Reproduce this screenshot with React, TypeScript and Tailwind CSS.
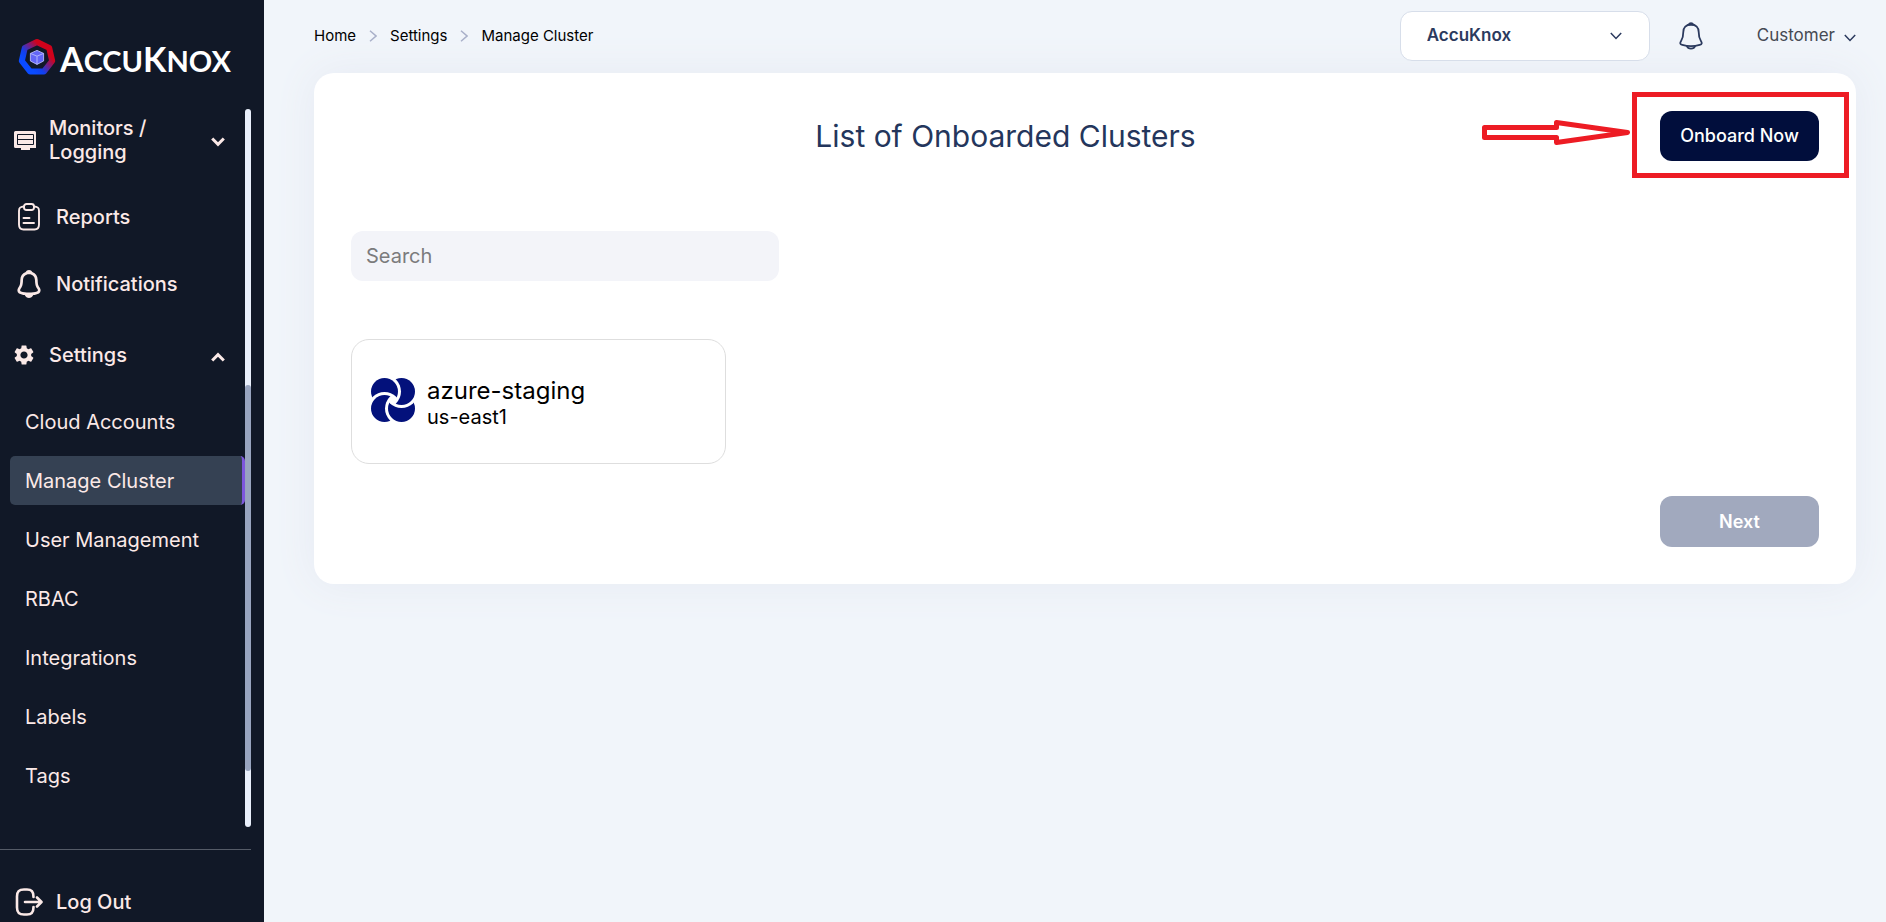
import type { ReactNode } from "react";
import { MdSettings } from "react-icons/md";

const subItems = [
  "Cloud Accounts",
  "Manage Cluster",
  "User Management",
  "RBAC",
  "Integrations",
  "Labels",
  "Tags",
];

function LogoMark() {
  return (
    <svg viewBox="0 0 38 38" className="size-[38px] shrink-0" aria-hidden="true">
      <defs>
        <linearGradient id="ring" x1="0.85" y1="0.2" x2="0.2" y2="0.8">
          <stop offset="0.15" stopColor="#d0021b" />
          <stop offset="0.75" stopColor="#1040f0" />
          <stop offset="1" stopColor="#0a4bff" />
        </linearGradient>
      </defs>
      <path
        d="M19 4 31.2 9.9 34.2 23 25.8 33.6H12.2L3.8 23 6.8 9.9Z"
        fill="none"
        stroke="url(#ring)"
        strokeWidth="6"
        strokeLinejoin="round"
      />
      <path d="M19 12.4 25.6 15.4V23L19 26.4 12.4 23V15.4Z" fill="#6366f8" />
      <path
        d="M19 12.4 25.6 15.4V23L19 26.4 12.4 23V15.4ZM12.4 15.4 19 18.2 25.6 15.4M19 18.2V26.4"
        fill="none"
        stroke="#b9bbff"
        strokeWidth="0.9"
      />
    </svg>
  );
}

function MonitorIcon() {
  return (
    <svg viewBox="0 0 22 19" className="h-[19px] w-[22px] shrink-0" aria-hidden="true">
      <path
        fill="currentColor"
        d="M1.5 0H20.5A1.5 1.5 0 0 1 22 1.5V17H16V19H7V17H1.5A1.5 1.5 0 0 1 0 15.500V1.500A1.5 1.5 0 0 1 1.500 0Z"
      />
      <path d="M3.500 3.500H19.500V13.500H3.500ZM3.500 8.500H19.500" fill="none" stroke="#111827" strokeWidth="1" />
    </svg>
  );
}

function ReportIcon() {
  return (
    <svg
      viewBox="0 0 24 28"
      className="h-7 w-6 shrink-0"
      fill="none"
      stroke="currentColor"
      strokeWidth="1.9"
      strokeLinecap="round"
      strokeLinejoin="round"
      aria-hidden="true"
    >
      <rect x="7" y="1" width="10" height="6" rx="2.500" />
      <path d="M7 3.500C3 3.600 2 5 2 8V21.500C2 25 3 26.500 6.500 26.500H17.500C21 26.500 22 25 22 21.500V8C22 5 21 3.600 17 3.500" />
      <path d="M6.500 15H12.500M6.500 20H17" />
    </svg>
  );
}

function BellSolidIcon() {
  return (
    <svg viewBox="0 0 24 28" className="h-7 w-6 shrink-0" aria-hidden="true">
      <path
        fill="currentColor"
        fillRule="evenodd"
        d="M12 0C13.500 0 14.700 .8 15.300 2.100 18.800 3.400 20.600 6.300 20.700 10 20.800 14.500 21.300 15.700 22.800 17.800 24 19.600 24 22.300 22 23.400 20.300 24.300 18 24.800 16.300 25.100 15.300 27 13.800 28 12 28S8.700 27 7.700 25.100C6 24.800 3.700 24.300 2 23.400 0 22.300 0 19.600 1.200 17.800 2.700 15.700 3.200 14.500 3.300 10 3.400 6.300 5.200 3.400 8.700 2.100 9.300 .8 10.500 0 12 0ZM12 4.300C8.300 4.300 6.100 6.700 6 10.300 5.900 15.200 5 16.800 3.500 19.100 2.900 20.300 3 21 4 21.400 8.500 22.900 15.500 22.900 20 21.400 21 21 21.100 20.300 20.500 19.100 19 16.800 18.100 15.200 18 10.300 17.900 6.700 15.700 4.300 12 4.300Z"
      />
    </svg>
  );
}

function BellOutlineIcon() {
  return (
    <svg
      viewBox="0 0 24 28"
      className="h-7 w-6"
      fill="none"
      stroke="currentColor"
      strokeWidth="1.8"
      strokeLinecap="round"
      strokeLinejoin="round"
      aria-hidden="true"
    >
      <path d="M12 2.500C7 2.500 4.300 5.800 4.300 10 4.300 15 3.800 16.300 2.200 18.700 .6 21 1 22.300 3.300 22.900 9 24.600 15 24.600 20.700 22.900 23 22.300 23.400 21 21.800 18.700 20.200 16.300 19.700 15 19.700 10 19.700 5.800 17 2.500 12 2.500Z" />
      <path d="M9.800 2.500C10.500 .8 13.500 .8 14.200 2.500ZM8 24.300C9 27.500 15 27.500 16 24.300" />
    </svg>
  );
}

function LogoutIcon() {
  return (
    <svg
      viewBox="0 0 28 28"
      className="size-7 shrink-0"
      fill="none"
      stroke="currentColor"
      strokeWidth="2.6"
      strokeLinecap="round"
      strokeLinejoin="round"
      aria-hidden="true"
    >
      <path d="M18.500 9C18.500 3.500 16.500 1.500 12 1.500H9C4 1.500 2 3.500 2 8.500V19.500C2 24.500 4 26.500 9 26.500H12C16.500 26.500 18.500 24.500 18.500 19" />
      <path d="M10 14H26M22 9.500 26.500 14 22 18.500" />
    </svg>
  );
}

function PetalIcon() {
  const petals = [
    { id: "petal-a", x: 13.5, y: 13.5, cutX: 13.5, cutY: 30.5 },
    { id: "petal-b", x: 30.5, y: 13.5, cutX: 13.5, cutY: 13.5 },
    { id: "petal-c", x: 30.5, y: 30.5, cutX: 30.5, cutY: 13.5 },
    { id: "petal-d", x: 13.5, y: 30.5, cutX: 30.5, cutY: 30.5 },
  ];
  return (
    <svg viewBox="0 0 44 44" className="size-11 shrink-0" aria-hidden="true">
      {petals.map((p) => (
        <g key={p.id}>
          <mask id={p.id} maskUnits="userSpaceOnUse" x="0" y="0" width="44" height="44">
            <rect width="44" height="44" fill="white" />
            <circle cx={p.cutX} cy={p.cutY} r="16.5" fill="black" />
          </mask>
          <circle cx={p.x} cy={p.y} r="13.5" fill="#03117b" mask={`url(#${p.id})`} />
        </g>
      ))}
    </svg>
  );
}

function BoldChevron({ up = false }: { up?: boolean }) {
  return (
    <svg
      viewBox="0 0 14 10"
      className="mt-1 h-2.5 w-3.5 shrink-0"
      fill="none"
      stroke="currentColor"
      strokeWidth="3"
      aria-hidden="true"
    >
      <path d={up ? "M1.200 8.500 7 2.700 12.800 8.500" : "M1.200 1.500 7 7.300 12.800 1.500"} />
    </svg>
  );
}

function ThinChevron({ className }: { className: string }) {
  return (
    <svg
      viewBox="0 0 12 8"
      className={className}
      fill="none"
      stroke="currentColor"
      strokeWidth="1.5"
      aria-hidden="true"
    >
      <path d="M.8 1 6 6.500 11.200 1" />
    </svg>
  );
}

function CrumbChevron() {
  return (
    <svg
      viewBox="0 0 8 12"
      className="h-3 w-2 text-[#a9b0c9]"
      fill="none"
      stroke="currentColor"
      strokeWidth="1.5"
      aria-hidden="true"
    >
      <path d="M1 .8 7 6 1 11.200" />
    </svg>
  );
}

function NavLink({ icon, children }: { icon: ReactNode; children: ReactNode }) {
  return (
    <a href="#" className="flex h-[67px] items-center gap-[15px] pl-[17px] text-xl font-medium">
      <span className="flex w-6 justify-center">{icon}</span>
      {children}
    </a>
  );
}

function Sidebar() {
  return (
    <aside className="flex w-[264px] shrink-0 flex-col bg-[#111827] text-[#fbe9e7]">
      <a href="#" aria-label="AccuKnox" className="flex h-[109px] shrink-0 items-center gap-1 pt-1 pl-[18px] text-white">
        <LogoMark />
        <span className="pt-1 font-['Lato',sans-serif] text-[29px] leading-none font-bold">
          <span className="text-[34px]">A</span>CCU<span className="text-[34px]">K</span>NOX
        </span>
      </a>
      <div className="flex h-[718px] shrink-0 pr-[13px]">
        <nav className="min-w-0 flex-1">
          <button type="button" className="mb-3 flex h-[62px] w-full items-center pr-5 pl-3.5 text-left text-xl leading-6 font-medium">
            <MonitorIcon />
            <span className="ml-[13px] flex-1">
              Monitors /<br />
              Logging
            </span>
            <BoldChevron />
          </button>
          <NavLink icon={<ReportIcon />}>Reports</NavLink>
          <NavLink icon={<BellSolidIcon />}>Notifications</NavLink>
          <button type="button" className="flex h-[75px] w-full items-center pr-5 pl-3 text-left text-xl font-medium">
            <MdSettings className="size-6" />
            <span className="ml-[13px] flex-1">Settings</span>
            <BoldChevron up />
          </button>
          <ul className="flex flex-col gap-2.5 pt-[5px] pl-2.5 text-xl">
            {subItems.map((item) => (
              <li key={item}>
                <a
                  href="#"
                  className={
                    item === "Manage Cluster"
                      ? "flex h-[49px] items-center rounded-[5px] border-r-3 border-[#7e57dd] bg-[#354153] pl-[15px]"
                      : "flex h-[49px] items-center pl-[15px]"
                  }
                >
                  {item}
                </a>
              </li>
            ))}
          </ul>
        </nav>
        <div className="w-1.5 rounded-full bg-[#e9effb] pt-[276px]">
          <div className="h-[386px] rounded-full bg-[#98a4bf]" />
        </div>
      </div>
      <div className="mt-[22px] mr-[13px] shrink-0 border-t border-[#555b67] pt-[18px]">
        <NavLink icon={<LogoutIcon />}>Log Out</NavLink>
      </div>
    </aside>
  );
}

function TopBar() {
  return (
    <header className="flex h-[73px] items-center justify-between pb-px">
      <nav aria-label="Breadcrumb" className="flex items-center gap-[13px] text-[15px] text-black">
        <a href="#">Home</a>
        <CrumbChevron />
        <a href="#">Settings</a>
        <CrumbChevron />
        <a href="#">Manage Cluster</a>
      </nav>
      <div className="flex items-center">
        <div className="relative">
          <select
            aria-label="Workspace"
            className="block h-[50px] w-[250px] appearance-none rounded-xl border border-[#d7deea] bg-white pl-[26px] text-[17px] font-semibold text-[#2b3a5e]"
          >
            <option>AccuKnox</option>
          </select>
          <ThinChevron className="pointer-events-none absolute top-[21px] right-7 h-2 w-3 text-[#2b3a5e]" />
        </div>
        <button type="button" aria-label="Notifications" className="ml-[29px] text-[#2b3a5e]">
          <BellOutlineIcon />
        </button>
        <button type="button" className="ml-[54px] flex items-center gap-[9px] text-[17px] text-[#464a53]">
          Customer
          <ThinChevron className="mt-1 h-2 w-3 text-[#2b3a5e]" />
        </button>
      </div>
    </header>
  );
}

function Callout() {
  return (
    <>
      <div className="pointer-events-none absolute -top-[19px] -right-[30px] -bottom-[17px] -left-7 border-5 border-[#ed1c24]" />
      <svg
        viewBox="0 0 148 26"
        className="pointer-events-none absolute top-[9px] right-[189px] h-[26px] w-[148px]"
        fill="none"
        stroke="#ed1c24"
        strokeWidth="5"
        strokeLinejoin="round"
        aria-hidden="true"
      >
        <path d="M2.500 7.500H74.500V2.500L145.500 12.500 74.500 22.500V17.500H2.500Z" />
      </svg>
    </>
  );
}

export default function App() {
  return (
    <div className="flex h-screen overflow-hidden bg-[#f1f5fa] font-['Inter',sans-serif]">
      <Sidebar />
      <div className="min-w-0 flex-1 pr-[30px] pl-[50px]">
        <TopBar />
        <main className="rounded-[20px] bg-white px-[37px] pt-[38px] pb-[37px] shadow-[0_0_40px_#e6eaf3]">
          <div className="flex items-center">
            <h1 className="flex-1 text-center text-3xl font-normal text-[#24365c]">List of Onboarded Clusters</h1>
            <div className="relative">
              <button type="button" className="h-[50px] w-[159px] rounded-xl bg-[#010e3c] text-lg font-medium text-white">
                Onboard Now
              </button>
              <Callout />
            </div>
          </div>
          <input
            type="search"
            aria-label="Search"
            placeholder="Search"
            className="mt-[70px] block h-[50px] w-[428px] rounded-xl bg-[#f3f4f9] px-[15px] text-xl placeholder:text-[#7b7b7d]"
          />
          <a href="#" className="mt-[58px] flex h-[125px] w-[375px] items-center gap-3 rounded-[18px] border border-[#dedede] px-[19px] pb-1 text-black">
            <PetalIcon />
            <span className="flex flex-col pt-1.5">
              <span className="text-2xl leading-7">azure-staging</span>
              <span className="text-xl leading-6">us-east1</span>
            </span>
          </a>
          <div className="mt-8 flex justify-end">
            <button type="button" className="h-[51px] w-[159px] rounded-xl bg-[#a1a9be] text-lg font-semibold text-white">
              Next
            </button>
          </div>
        </main>
      </div>
    </div>
  );
}
